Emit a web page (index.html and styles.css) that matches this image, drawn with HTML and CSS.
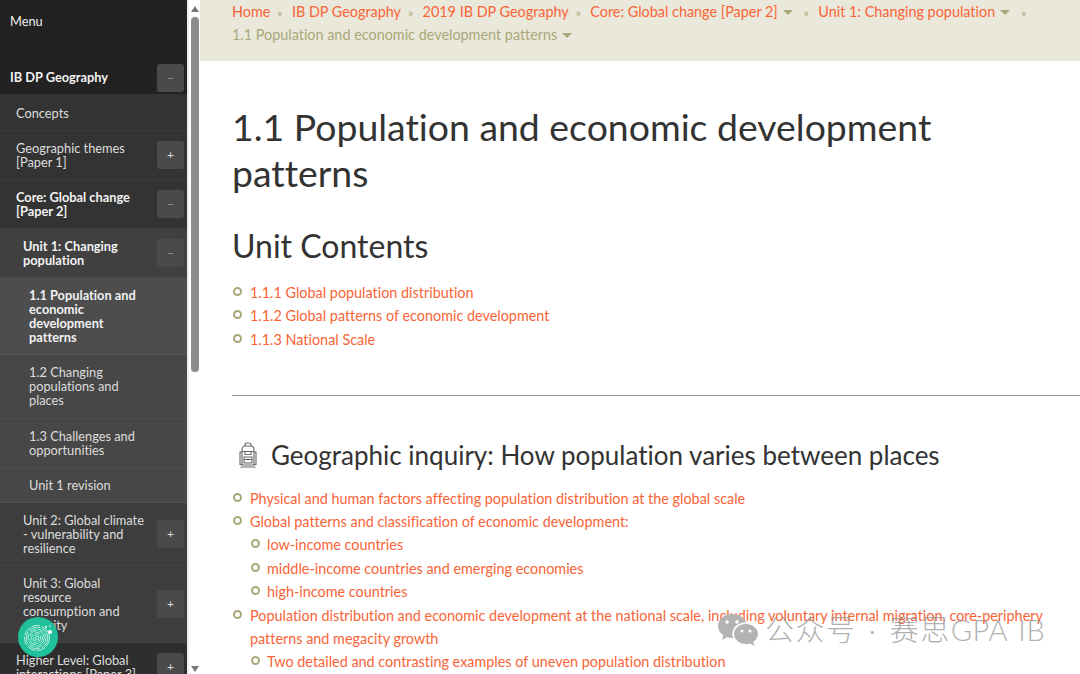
FILE: index.html
```html
<!DOCTYPE html>
<html lang="en">

<head>
    <meta charset="UTF-8">
    <meta name="viewport" content="width=device-width, initial-scale=1.0">
    <title>1.1 Population and economic development patterns</title>
    <link rel="stylesheet" href="styles.css">
</head>

<body>
    <div class="app">
        <nav class="sidebar">
            <div class="menu-label">Menu</div>
            <div class="nav-row level-0 bold root-row">
                <span class="nav-text">IB DP Geography</span>
                <span class="toggle muted">&minus;</span>
            </div>
            <div class="nav-row level-1 concepts"><span class="nav-text">Concepts</span></div>
            <div class="nav-row level-1">
                <span class="nav-text">Geographic themes [Paper 1]</span>
                <span class="toggle">+</span>
            </div>
            <div class="nav-row level-1 bold">
                <span class="nav-text">Core: Global change [Paper 2]</span>
                <span class="toggle muted">&minus;</span>
            </div>
            <div class="nav-row level-2 bold open">
                <span class="nav-text">Unit 1: Changing population</span>
                <span class="toggle muted">&minus;</span>
            </div>
            <div class="nav-row level-3 bold current"><span class="nav-text">1.1 Population and economic development patterns</span></div>
            <div class="nav-row level-3 sub tall"><span class="nav-text">1.2 Changing populations and places</span></div>
            <div class="nav-row level-3 sub"><span class="nav-text">1.3 Challenges and opportunities</span></div>
            <div class="nav-row level-3 sub last"><span class="nav-text">Unit 1 revision</span></div>
            <div class="nav-row level-2">
                <span class="nav-text">Unit 2: Global climate - vulnerability and resilience</span>
                <span class="toggle">+</span>
            </div>
            <div class="nav-row level-2">
                <span class="nav-text">Unit 3: Global resource consumption and security</span>
                <span class="toggle">+</span>
            </div>
            <div class="nav-row level-1 higher">
                <span class="nav-text">Higher Level: Global interactions [Paper 3]</span>
                <span class="toggle">+</span>
            </div>
        </nav>

        <div class="scrollbar">
            <span class="arrow arrow-up"></span>
            <span class="thumb"></span>
            <span class="arrow arrow-down"></span>
        </div>

        <main class="content">
            <div class="breadcrumbs">
                <a>Home</a><span class="sep">»</span>
                <a>IB DP Geography</a><span class="sep">»</span>
                <a>2019 IB DP Geography</a><span class="sep">»</span>
                <a>Core: Global change [Paper 2]</a><span class="caret"></span><span class="sep wide">»</span>
                <a>Unit 1: Changing population</a><span class="caret"></span><span class="sep wide">»</span>
                <span class="crumb-current">1.1 Population and economic development patterns</span><span class="caret"></span>
            </div>

            <div class="article">
                <h1>1.1 Population and economic development patterns</h1>
                <h2>Unit Contents</h2>
                <ul class="links">
                    <li><a>1.1.1 Global population distribution</a></li>
                    <li><a>1.1.2 Global patterns of economic development</a></li>
                    <li><a>1.1.3 National Scale</a></li>
                </ul>
                <hr>
                <h3>
                    <svg class="pack-icon" width="18" height="26" viewBox="0 0 18 26" fill="none" stroke="#666" stroke-width="1.1">
                        <path d="M6 4V2.500C6 1.500 7 1 9 1s3 .5 3 1.500V4"/>
                        <path d="M3 7.500C3 5 5 4 6.500 4h5C13 4 15 5 15 7.500V23H3z"/>
                        <path d="M3 9.500h12M6 9.500v3h6v-3"/>
                        <path d="M5 15h8v6H5zM5 17.500h8M9 16.500v2"/>
                        <path d="M3 10H1v12.500h2M15 10h2v12.500h-2M1.500 25h15"/>
                    </svg>
                    Geographic inquiry: How population varies between places
                </h3>
                <ul class="links">
                    <li><a>Physical and human factors affecting population distribution at the global scale</a></li>
                    <li><a>Global patterns and classification of economic development:</a>
                        <ul>
                            <li><a>low-income countries</a></li>
                            <li><a>middle-income countries and emerging economies</a></li>
                            <li><a>high-income countries</a></li>
                        </ul>
                    </li>
                    <li><a>Population distribution and economic development at the national scale, including voluntary internal migration, core-periphery patterns and megacity growth</a>
                        <ul>
                            <li><a>Two detailed and contrasting examples of uneven population distribution</a></li>
                        </ul>
                    </li>
                </ul>
            </div>
        </main>
    </div>

    <!-- floating chat button -->
    <div class="chat-badge">
        <svg width="40" height="40" viewBox="0 0 40 40" fill="none" stroke="#e4f8f1" stroke-width="0.8">
            <circle cx="19" cy="21" r="12.500" stroke-dasharray="9 1.500"/>
            <circle cx="19" cy="21" r="10.800" stroke-dasharray="12 2"/>
            <circle cx="19" cy="21" r="9" stroke-dasharray="7 1.500"/>
            <circle cx="19" cy="21" r="7.200" stroke-dasharray="10 2"/>
            <circle cx="19" cy="21" r="5.400" stroke-dasharray="6 1.500"/>
            <circle cx="19" cy="21" r="3.600" stroke-dasharray="5 1.500"/>
            <circle cx="19" cy="21" r="1.800"/>
            <circle cx="32" cy="15" r="2" fill="#fff" stroke="none"/>
            <circle cx="28" cy="10" r="1" fill="#fff" stroke="none"/>
            <circle cx="32" cy="9" r="0.800" fill="#fff" stroke="none"/>
        </svg>
    </div>

    <!-- watermark over the page -->
    <div class="watermark">
        <svg width="42" height="34" viewBox="0 0 42 34">
            <path fill="#b3b3b3" d="M15 1C7 1 1 6.500 1 13c0 3.800 2 7 5.200 9.200L5 27l5-2.800c1.600.5 3.200.7 5 .7h1.200C15.500 23.400 15.300 22 15.300 21c0-6.500 5.800-11.500 13-11.500h.7C27.500 4.500 21.800 1 15 1z"/>
            <path fill="#b3b3b3" d="M41 21c0-5.500-5.500-10-12-10s-12 4.500-12 10 5.500 10 12 10c1.400 0 2.700-.2 4-.6l4.500 2.600-1.200-4.200C39 26.800 41 24 41 21z"/>
            <circle cx="10" cy="9" r="1.800" fill="#fff"/>
            <circle cx="20" cy="9" r="1.800" fill="#fff"/>
            <circle cx="25" cy="18" r="1.500" fill="#fff"/>
            <circle cx="33" cy="18" r="1.500" fill="#fff"/>
        </svg>
        <span class="watermark-text">公众号 · 赛思<span class="watermark-latin">GPA IB</span></span>
    </div>
</body>

</html>
```

FILE: styles.css
```css
* {
    margin: 0;
    padding: 0;
    box-sizing: border-box;
}

html,
body {
    height: 100%;
    overflow: hidden;
}

body {
    font-family: 'Lato', 'Noto Sans CJK SC', sans-serif;
    font-variant-ligatures: none;
    background: white;
    color: #333;
    position: relative;
}

.app {
    display: flex;
    height: 674px;
}

/* sidebar */
.sidebar {
    width: 187px;
    flex-shrink: 0;
    height: 674px;
    overflow: hidden;
    background: #222;
    font-size: 12.800px;
    line-height: 14px;
    color: #ddd;
}

.menu-label {
    height: 61px;
    padding: 14px 0 0 10px;
    color: #eee;
}

.nav-row {
    display: flex;
    align-items: center;
    justify-content: space-between;
    padding: 10px 3px 10px 0;
    border-bottom: 1px solid rgba(255, 255, 255, 0.04);
}

.nav-text {
    flex: 1;
}

.bold {
    font-weight: bold;
    color: #f2f2f2;
}

.level-0 {
    padding-left: 10px;
    background: #222;
    height: 33px;
    border-bottom: none;
}

.root-row .nav-text {
    margin-bottom: 2px;
}

.level-1 {
    padding-left: 16px;
    background: #333;
    min-height: 48px;
}

.level-1 .nav-text {
    padding-right: 12px;
}

.concepts {
    min-height: 37px;
    padding-top: 11px;
    padding-bottom: 9px;
}

.higher {
    background: #2e2e2e;
}

.level-2 {
    padding-left: 23px;
    background: #3d3d3d;
}

.level-2 .nav-text {
    padding-right: 10px;
}

.level-2.open {
    background: #404040;
    height: 49px;
}

.level-3 {
    padding-left: 29px;
    padding-right: 40px;
    background: #474747;
}

.current {
    background: #4d4d4d;
    height: 77px;
}

.tall {
    padding-bottom: 11px;
}

.last {
    height: 35px;
}

.toggle {
    width: 27px;
    height: 28px;
    flex-shrink: 0;
    display: flex;
    align-items: center;
    justify-content: center;
    background: #4a4a4a;
    border-radius: 3px;
    color: #ddd;
    font-size: 12px;
    font-weight: normal;
}

.toggle.muted {
    color: #999;
}

/* scrollbar */
.scrollbar {
    width: 13px;
    flex-shrink: 0;
    display: flex;
    flex-direction: column;
    align-items: center;
    border-left: 2px solid #eee;
    background: #fff;
}

.arrow {
    width: 0;
    height: 0;
    border-left: 4px solid transparent;
    border-right: 4px solid transparent;
}

.arrow-up {
    border-bottom: 6px solid #777;
    margin: 6px 0 5px;
}

.arrow-down {
    border-top: 6px solid #777;
    margin-top: auto;
    margin-bottom: 2px;
}

.thumb {
    width: 8px;
    height: 355px;
    background: #8c8c8c;
    border-radius: 4px;
}

/* main column */
.content {
    flex: 1;
    min-width: 0;
    height: 674px;
    overflow: hidden;
}

.breadcrumbs {
    height: 61px;
    background: #eae8db;
    padding: 1px 20px 0 32px;
    font-size: 14.400px;
    line-height: 22.400px;
}

.breadcrumbs a,
.links a {
    color: #f96437;
}

.sep {
    color: #a9a878;
    font-size: 12px;
    margin: 0 5.700px 0 7px;
}

.sep.wide {
    margin-left: 11px;
}

.caret {
    display: inline-block;
    width: 0;
    height: 0;
    border-left: 5px solid transparent;
    border-right: 5px solid transparent;
    border-top: 5px solid #a9a878;
    margin-left: 5px;
    vertical-align: 2px;
}

.crumb-current {
    color: #a9a878;
    white-space: nowrap;
}

.article {
    padding: 43px 0 0 32px;
}

h1 {
    font-size: 37.400px;
    line-height: 46px;
    font-weight: normal;
    color: #333;
    margin-bottom: 31px;
    padding-right: 40px;
}

h2 {
    font-size: 32px;
    line-height: 38px;
    font-weight: normal;
    color: #333;
    margin-bottom: 15.800px;
}

.links {
    list-style: none;
    font-size: 14.400px;
    line-height: 23.400px;
}

.links li {
    position: relative;
    padding-left: 18px;
}

.links ul {
    list-style: none;
}

.links ul li {
    padding-left: 17px;
}

.links li::before {
    content: "";
    position: absolute;
    left: 1px;
    top: 6px;
    width: 5px;
    height: 5px;
    border: 2px solid #a9a878;
    border-radius: 50%;
}

hr {
    border: none;
    border-top: 1px solid #999;
    margin: 44.200px 0 41px;
}

h3 {
    display: flex;
    align-items: center;
    gap: 14px;
    font-size: 26px;
    line-height: 36px;
    font-weight: normal;
    color: #333;
    margin-bottom: 13.400px;
    white-space: nowrap;
}

.pack-icon {
    flex-shrink: 0;
    margin-left: 7px;
}

/* overlays */
.chat-badge {
    position: absolute;
    left: 18px;
    top: 617px;
    width: 40px;
    height: 40px;
    border-radius: 50%;
    background: #1fc09a;
}

.watermark {
    position: absolute;
    left: 717px;
    top: 612px;
    display: flex;
    align-items: center;
    gap: 6px;
}

.watermark-text {
    font-size: 29px;
    font-weight: 300;
    line-height: 36px;
    letter-spacing: 1.500px;
    word-spacing: 3px;
    color: rgba(150, 150, 150, 0.75);
    white-space: nowrap;
}

.watermark-latin {
    letter-spacing: 0.500px;
}
```
